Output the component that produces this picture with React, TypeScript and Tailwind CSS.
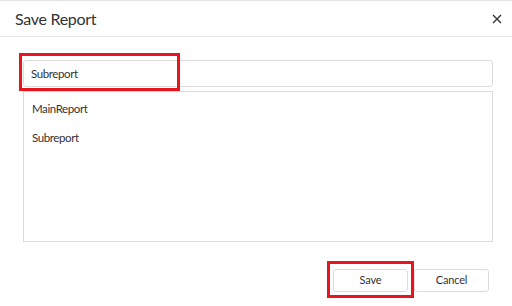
import React from "react";

export default function App() {
  const font = { fontFamily: 'Lato, "Noto Sans", sans-serif' };
  return (
    <div className="relative w-[512px] h-[306px] bg-white border-t border-[#e3e3e3] overflow-hidden" style={font}>
      <div className="flex items-center justify-between h-[36px] border-b border-[#e6e6e6] pl-[15px] pr-[10px]">
        <span className="text-[16px] tracking-[-0.3px] leading-none text-[#333333] pt-[1px]">Save Report</span>
        <svg width="10" height="10" viewBox="0 0 10 10">
          <path d="M1 1 L9 9 M9 1 L1 9" stroke="#333" strokeWidth="1.4" />
        </svg>
      </div>
      <div className="pl-[23px] pr-[19px] pt-[23px]">
        <div className="h-[27px] border border-[#dcdcdc] rounded-[3px] flex items-center pl-[7px] text-[11.5px] tracking-[-0.4px] text-[#333]">
          Subreport
        </div>
        <div className="mt-[4px] h-[151px] border border-[#dcdcdc] flex flex-col pl-[8px] pt-[2px] text-[11.5px] tracking-[-0.4px] text-[#333]">
          <div className="h-[29px] flex items-center">MainReport</div>
          <div className="h-[29px] flex items-center">Subreport</div>
        </div>
      </div>
      <div className="flex justify-end gap-[6px] pr-[23px] mt-[27px]">
        <button className="w-[75px] h-[23px] border border-[#dcdcdc] rounded-[3px] bg-white text-[11px] tracking-[-0.2px] text-[#333]">Save</button>
        <button className="w-[75px] h-[23px] border border-[#dcdcdc] rounded-[3px] bg-white text-[11px] tracking-[-0.2px] text-[#333]">Cancel</button>
      </div>
      <div className="absolute left-[19px] top-[52px] w-[161px] h-[38px] border-[3px] border-[#e8151f]" />
      <div className="absolute left-[327px] top-[260px] w-[87px] h-[37px] border-[3px] border-[#e8151f]" />
    </div>
  );
}
